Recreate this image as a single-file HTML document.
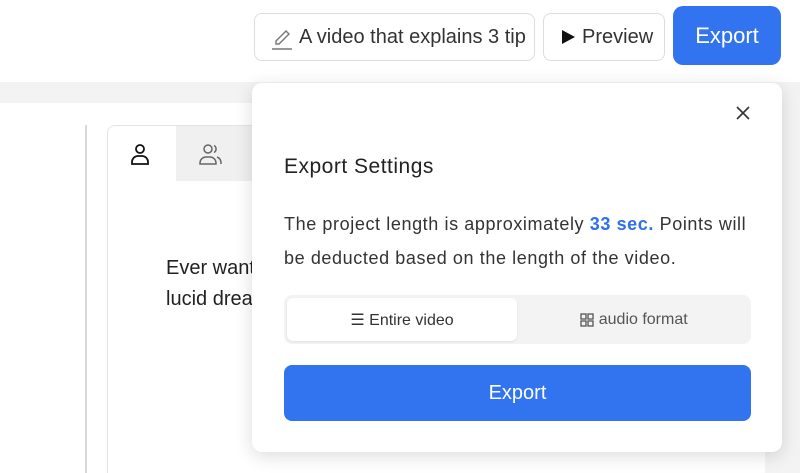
<!DOCTYPE html>
<html><head><style>
*{box-sizing:border-box;margin:0;padding:0}
body{width:800px;height:473px;overflow:hidden;background:#fff;font-family:"Liberation Sans",sans-serif;position:relative;color:#222}
.abs{position:absolute}
.btn{position:absolute;border:1px solid #ddd;border-radius:8px;background:#fff;display:flex;align-items:center;font-size:20px;color:#333}
</style></head><body>
<div class="abs" style="left:0;top:82px;width:800px;height:21px;background:#f3f3f3"></div>
<div class="abs" style="left:85px;top:125px;width:2px;height:348px;background:#d8d8d8"></div>
<div class="abs" style="left:107px;top:125px;width:660px;height:348px;border:1px solid #e4e4e4;border-bottom:none;border-radius:8px 0 0 0"></div>
<div class="abs" style="left:176px;top:126px;width:600px;height:55px;background:#f0f0f0"></div>
<div class="abs" style="left:108px;top:126px;width:68px;height:56px;background:#fff;border-radius:8px 0 0 0"></div>
<svg class="abs" style="left:130px;top:143px" width="20" height="24" viewBox="0 0 20 24" fill="none" stroke="#111" stroke-width="1.8"><circle cx="10" cy="6" r="4"/><path d="M2 21v-2a6 6 0 0 1 6-6h4a6 6 0 0 1 6 6v2z"/></svg>
<svg class="abs" style="left:199px;top:143px" width="24" height="24" viewBox="0 0 24 24" fill="none" stroke="#666" stroke-width="1.5"><circle cx="9" cy="6" r="4"/><path d="M1 21v-1a6 6 0 0 1 6-6h4a6 6 0 0 1 6 6v1z"/><path d="M15 2.5a4 4 0 0 1 0 7M18 14a6 6 0 0 1 4 6v1"/></svg>
<div class="abs" style="left:166px;top:253px;font-size:20px;line-height:31px;color:#222">Ever wanting<br>lucid dreams</div>
<div class="abs" style="left:765px;top:103px;width:35px;height:370px;background:#f3f3f3"></div>

<div class="btn" style="left:254px;top:13px;width:281px;height:48px;overflow:hidden;padding-left:16px;white-space:nowrap">
<svg width="22" height="26" viewBox="0 0 22 26" fill="none" stroke="#777" stroke-width="1.4"><path d="M5 17l10-10 3 3-10 10H5z"/><path d="M1 25h20"/></svg>
<span style="margin-left:6px">A video that explains 3 tip</span></div>
<div class="btn" style="left:543px;top:13px;width:122px;height:48px;padding-left:16px">
<svg width="16" height="18" viewBox="0 0 16 18"><path d="M2 2l13 7-13 7z" fill="#111"/></svg><span style="margin-left:6px">Preview</span></div>
<div class="abs" style="left:673px;top:6px;width:108px;height:59px;background:#3274f0;border-radius:10px;color:#fff;font-size:22px;display:flex;align-items:center;justify-content:center">Export</div>

<div class="abs" style="left:252px;top:83px;width:530px;height:369px;background:#fff;border-radius:10px;box-shadow:0 4px 18px rgba(0,0,0,.14)"></div>
<svg class="abs" style="left:736px;top:106px" width="14" height="14" viewBox="0 0 14 14" stroke="#333" stroke-width="1.6"><path d="M1 1l12 12M13 1L1 13"/></svg>
<div class="abs" style="left:284px;top:155px;font-size:21px;letter-spacing:.5px;color:#222">Export Settings</div>
<div class="abs" style="left:284px;top:207px;font-size:18px;letter-spacing:.6px;line-height:34px;color:#333;width:500px;white-space:nowrap">The project length is approximately <b style="color:#2f6fe8">33 sec.</b> Points will<br>be deducted based on the length of the video.</div>
<div class="abs" style="left:284px;top:295px;width:467px;height:49px;background:#f3f3f3;border-radius:8px"></div>
<div class="abs" style="left:287px;top:298px;width:230px;height:43px;background:#fff;border-radius:6px;box-shadow:0 1px 2px rgba(0,0,0,.08);display:flex;align-items:center;justify-content:center;font-size:16px;color:#333">☰&nbsp;Entire video</div>
<div class="abs" style="left:517px;top:298px;width:234px;height:43px;display:flex;align-items:center;justify-content:center;font-size:16px;color:#555">
<svg width="14" height="14" viewBox="0 0 14 14" fill="none" stroke="#555" stroke-width="1.3"><rect x="1" y="1" width="5" height="5"/><rect x="8" y="1" width="5" height="5"/><rect x="1" y="8" width="5" height="5"/><rect x="8" y="8" width="5" height="5"/></svg>&nbsp;audio format</div>
<div class="abs" style="left:284px;top:365px;width:467px;height:56px;background:#3274f0;border-radius:8px;color:#fff;font-size:20px;display:flex;align-items:center;justify-content:center">Export</div>
</body></html>
